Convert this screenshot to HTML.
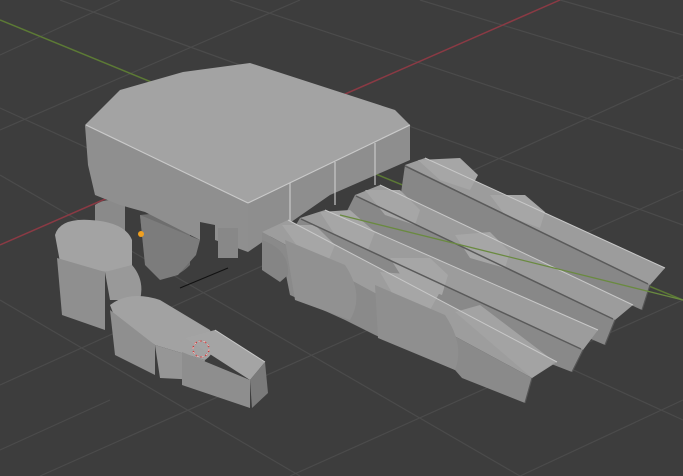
<!DOCTYPE html>
<html><head><style>
html,body{margin:0;padding:0;background:#3d3d3d;width:683px;height:476px;overflow:hidden}
svg{display:block}
</style></head><body>
<svg width="683" height="476" viewBox="0 0 683 476" xmlns="http://www.w3.org/2000/svg">
<rect width="683" height="476" fill="#3d3d3d"/>
<g stroke="#4b4b4b" stroke-width="1.2" fill="none">
<line x1="0" y1="108" x2="683" y2="420"/>
<line x1="0" y1="175" x2="520" y2="476"/>
<line x1="0" y1="300" x2="300" y2="476"/>
<line x1="60" y1="0" x2="683" y2="225"/>
<line x1="230" y1="0" x2="683" y2="150"/>
<line x1="420" y1="0" x2="683" y2="80"/>
<line x1="560" y1="0" x2="683" y2="35"/>
<line x1="0" y1="55" x2="120" y2="0"/>
<line x1="0" y1="130" x2="300" y2="0"/>
<line x1="0" y1="385" x2="683" y2="75"/>
<line x1="40" y1="476" x2="683" y2="190"/>
<line x1="290" y1="476" x2="683" y2="300"/>
<line x1="520" y1="476" x2="683" y2="400"/>
<line x1="0" y1="450" x2="110" y2="400"/>
</g>
<line x1="0" y1="20" x2="683" y2="300" stroke="#5c7a35" stroke-width="1.5"/>
<line x1="0" y1="245" x2="560" y2="0" stroke="#8a3a44" stroke-width="1.5"/>

<path d="M140 215 L190 210 L190 265 Q165 290 145 262 Z" fill="#6e6e6e"/>
<path d="M95 205 Q110 195 125 205 L125 235 L95 235 Z" fill="#8a8a8a"/>

<polygon points="85,125 120,90 183,72 250,63 395,110 410,125 248,203" fill="#a3a3a3"/>
<polygon points="85,125 248,203 248,252 215,240 215,225 200,222 200,240 145,212 120,205 95,195 88,165" fill="#8f8f8f"/>
<polygon points="248,203 410,125 410,160 330,195 248,252" fill="#8e8e8e"/>
<polygon points="140,215 200,240 196,255 178,275 160,280 145,265" fill="#7c7c7c"/>
<rect x="218" y="228" width="20" height="30" fill="#888"/>
<g stroke="#c9c9c9" stroke-width="1.2" fill="none">
<line x1="86" y1="125" x2="248" y2="203"/>
<line x1="248" y1="203" x2="410" y2="125"/>
<line x1="290" y1="183" x2="290" y2="228"/>
<line x1="335" y1="162" x2="335" y2="205"/>
<line x1="375" y1="143" x2="375" y2="185"/>
</g>

<g>
<polygon points="405,165 425,158 665,268 650,285" fill="#9c9c9c"/>
<polygon points="405,165 650,285 642,310 400,200" fill="#878787"/>
<polygon points="418,160 460,158 478,175 470,190 440,180" fill="#a6a6a6"/>
<polygon points="490,195 525,195 545,212 540,228 505,215" fill="#a6a6a6"/>
<polygon points="355,195 380,185 633,305 615,320" fill="#9c9c9c"/>
<polygon points="355,195 615,320 605,345 348,235 345,215" fill="#888"/>
<polygon points="365,190 400,190 420,210 415,225 385,215" fill="#a6a6a6"/>
<polygon points="455,235 490,232 510,252 505,268 470,258" fill="#a6a6a6"/>
<polygon points="300,218 325,210 598,330 583,350" fill="#9c9c9c"/>
<polygon points="300,218 583,350 572,372 295,265 290,235" fill="#898989"/>
<polygon points="320,212 350,210 375,232 368,250 335,235" fill="#a6a6a6"/>
<polygon points="390,258 430,258 448,275 442,295 405,282" fill="#a6a6a6"/>
<path d="M365 270 Q385 300 375 325 L360 325 L358 280 Z" fill="#8c8c8c"/>
<polygon points="262,232 288,220 557,362 532,378" fill="#9d9d9d"/>
<polygon points="262,232 532,378 525,403 462,378 455,370 375,335 345,320 290,295 285,270 262,262" fill="#8a8a8a"/>
<polygon points="282,225 315,225 335,245 328,262 300,250" fill="#a6a6a6"/>
<polygon points="380,272 420,275 440,292 430,310 395,298" fill="#a6a6a6"/>
<polygon points="455,312 480,305 555,362 532,378" fill="#a3a3a3"/>
<path d="M262 240 Q290 250 288 275 L280 282 L262 270 Z" fill="#858585"/>
<path d="M285 240 L345 265 Q365 295 350 320 L295 300 Z" fill="#919191"/>
<path d="M375 285 L445 315 Q465 345 455 370 L378 338 Z" fill="#8f8f8f"/>
</g>
<g stroke="#5a5a5a" stroke-width="1.5" fill="none">
<line x1="405" y1="166" x2="648" y2="284"/>
<line x1="356" y1="196" x2="613" y2="319"/>
<line x1="301" y1="219" x2="581" y2="349"/>
</g>
<g stroke="#c8c8c8" stroke-width="1" fill="none">
<line x1="425" y1="158" x2="665" y2="268"/>
<line x1="380" y1="185" x2="633" y2="305"/>
<line x1="325" y1="210" x2="598" y2="330"/>
<line x1="288" y1="220" x2="557" y2="362"/>
</g>
<g stroke="#555" stroke-width="1.2" fill="none">
<line x1="650" y1="285" x2="642" y2="310"/>
<line x1="615" y1="320" x2="605" y2="345"/>
<line x1="583" y1="350" x2="572" y2="372"/>
<line x1="532" y1="378" x2="525" y2="403"/>
</g>
<line x1="340" y1="215" x2="683" y2="300" stroke="#6a8a40" stroke-width="1.3"/>

<path d="M55 235 Q60 218 90 220 Q125 222 132 240 L132 268 L105 272 L60 262 Z" fill="#a3a3a3"/>
<path d="M57 258 L105 272 L105 330 L62 315 Z" fill="#8f8f8f"/>
<path d="M105 272 L132 265 Q145 280 140 300 L110 300 Z" fill="#999"/>
<path d="M110 305 Q130 290 160 300 L210 330 Q220 350 205 360 L155 345 L115 318 Z" fill="#a2a2a2"/>
<path d="M110 310 L155 345 L155 375 L115 355 Z" fill="#8f8f8f"/>
<path d="M155 345 L205 360 L200 380 L160 378 Z" fill="#969696"/>
<path d="M185 338 L215 330 L265 362 L250 380 Z" fill="#a4a4a4"/>
<path d="M182 352 L250 380 L250 408 L182 385 Z" fill="#8e8e8e"/>
<path d="M250 380 L265 362 L268 393 L252 408 Z" fill="#7a7a7a"/>
<line x1="215" y1="330" x2="265" y2="362" stroke="#c8c8c8" stroke-width="1"/>
<circle cx="201" cy="349" r="8" fill="none" stroke="#c33" stroke-width="1.4" stroke-dasharray="3 2"/>
<circle cx="201" cy="349" r="8" fill="none" stroke="#eee" stroke-width="0.8" stroke-dasharray="2 3"/>
<line x1="180" y1="288" x2="228" y2="268" stroke="#111" stroke-width="1"/>
<circle cx="141" cy="234" r="3" fill="#f0a020"/>
</svg>
</body></html>
